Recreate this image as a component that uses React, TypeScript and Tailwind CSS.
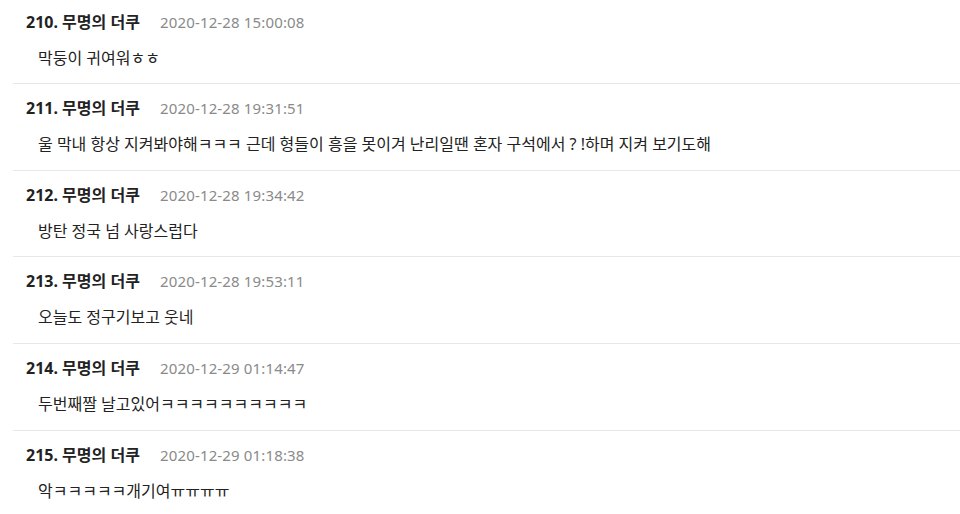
import React from "react";

const rows = [
  { n: 210, date: "2020-12-28 15:00:08", text: "막둥이 귀여워ㅎㅎ", pb: "pb-[15px]" },
  { n: 211, date: "2020-12-28 19:31:51", text: "울 막내 항상 지켜봐야해ㅋㅋㅋ 근데 형들이 흥을 못이겨 난리일땐 혼자 구석에서 ? !하며 지켜 보기도해", pb: "pb-[16px]" },
  { n: 212, date: "2020-12-28 19:34:42", text: "방탄 정국 넘 사랑스럽다", pb: "pb-[15px]" },
  { n: 213, date: "2020-12-28 19:53:11", text: "오늘도 정구기보고 웃네", pb: "pb-[16px]" },
  { n: 214, date: "2020-12-29 01:14:47", text: "두번째짤 날고있어ㅋㅋㅋㅋㅋㅋㅋㅋㅋㅋ", pb: "pb-[16px]" },
  { n: 215, date: "2020-12-29 01:18:38", text: "악ㅋㅋㅋㅋㅋ개기여ㅠㅠㅠㅠ", pb: "pb-[16px]" },
];

export default function App() {
  return (
    <div
      className="w-[960px] h-[514px] overflow-hidden bg-white"
      style={{ fontFamily: '"Noto Sans", "Noto Sans CJK KR", sans-serif' }}
    >
      <div className="-mt-[2px] pl-[13px]">
        {rows.map((r) => (
          <div key={r.n} className={`pt-[14px] ${r.pb} border-b border-[#e8e8e8]`}>
            <div className="flex items-center h-[20px] pl-[13px]">
              <span className="text-[16px] font-bold text-[#222] w-[134px] whitespace-nowrap">{r.n}. 무명의 더쿠</span>
              <span className="text-[15px] tracking-[0.15px] text-[#8a8a8a] whitespace-nowrap">{r.date}</span>
            </div>
            <div className="mt-[16px] h-[20px] flex items-center pl-[25px] text-[16px] text-[#222] whitespace-nowrap">
              {r.text}
            </div>
          </div>
        ))}
      </div>
    </div>
  );
}
